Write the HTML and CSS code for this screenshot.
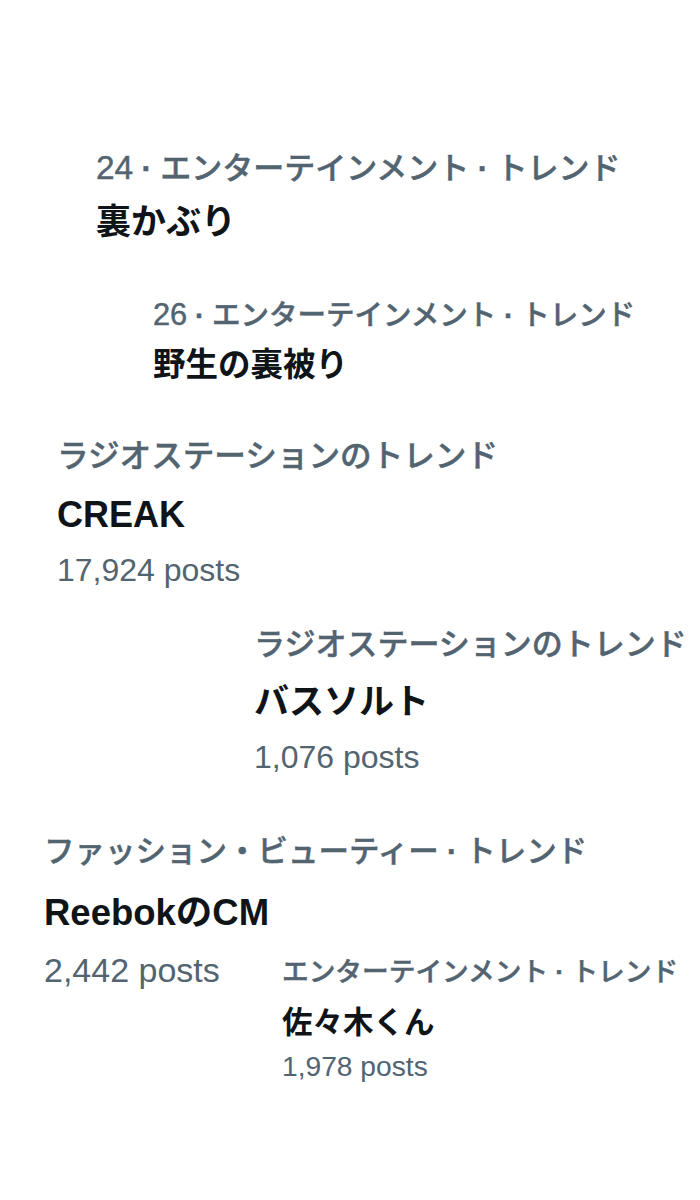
FILE: index.html
```html
<!DOCTYPE html>
<html lang="ja">
<head>
<meta charset="utf-8">
<title>トレンド</title>
<link rel="stylesheet" href="styles.css">
</head>
<body>
<main class="board">
  <article class="trend t1">
    <p class="cat"><span class="num">24</span><span class="sep">·</span>エンターテインメント<span class="sep">·</span>トレンド</p>
    <p class="name">裏かぶり</p>
  </article>
  <article class="trend t2">
    <p class="cat"><span class="num">26</span><span class="sep">·</span>エンターテインメント<span class="sep">·</span>トレンド</p>
    <p class="name">野生の裏被り</p>
  </article>
  <article class="trend t3">
    <p class="cat">ラジオステーションのトレンド</p>
    <p class="name">CREAK</p>
    <p class="posts">17,924 posts</p>
  </article>
  <article class="trend t4">
    <p class="cat">ラジオステーションのトレンド</p>
    <p class="name">バスソルト</p>
    <p class="posts">1,076 posts</p>
  </article>
  <div class="pair">
    <article class="trend t5">
      <p class="cat">ファッション・ビューティー<span class="sep">·</span>トレンド</p>
      <p class="name">ReebokのCM</p>
      <p class="posts">2,442 posts</p>
    </article>
    <article class="trend t6">
      <p class="cat">エンターテインメント<span class="sep">·</span>トレンド</p>
      <p class="name">佐々木くん</p>
      <p class="posts">1,978 posts</p>
    </article>
  </div>
</main>
</body>
</html>
```
FILE: styles.css
```css
html, body {
  margin: 0;
  padding: 0;
  background: #ffffff;
}

body {
  width: 700px;
  height: 1200px;
  overflow: hidden;
  font-family: "Liberation Sans", "Noto Sans CJK JP", sans-serif;
}

.board {
  display: flow-root;
  padding-top: 141px;
}

.trend {
  margin-left: var(--left);
  margin-top: var(--mt);
}

.trend p {
  margin: 0;
  white-space: nowrap;
}

.cat {
  font-size: var(--cat);
  line-height: var(--h1);
  height: var(--h1);
  color: #536471;
  font-weight: 500;
  -webkit-text-stroke: 0.45px #536471;
}

.num {
  font-size: 1.08em;
}

.sep {
  padding: 0 0.27em;
  font-weight: 700;
}

.name {
  font-size: var(--title);
  line-height: var(--h2);
  height: var(--h2);
  color: #0f1419;
  font-weight: 700;
}

.posts {
  font-size: var(--posts);
  line-height: var(--h3);
  height: var(--h3);
  color: #536471;
}

.t1 {
  --left: 96px;
  --mt: 0px;
  --cat: 31px;
  --title: 35px;
  --h1: 54px;
  --h2: 54px;
}

.t2 {
  --left: 153px;
  --mt: 40px;
  --cat: 28.5px;
  --title: 32.5px;
  --h1: 51px;
  --h2: 51px;
}

.t3 {
  --left: 57px;
  --mt: 35px;
  --cat: 31.6px;
  --title: 36px;
  --posts: 32px;
  --h1: 60px;
  --h2: 57px;
  --h3: 54px;
}

.t4 {
  --left: 254px;
  --mt: 19px;
  --cat: 31px;
  --title: 35px;
  --posts: 32px;
  --h1: 58px;
  --h2: 56px;
  --h3: 54px;
}

.pair {
  display: grid;
  grid-template-columns: 238px 1fr;
  align-items: start;
  margin-top: 35px;
  padding-left: 44px;
}

.t5 {
  --left: 0px;
  --mt: 0px;
  --cat: 30.5px;
  --title: 36.5px;
  --posts: 34px;
  --h1: 64px;
  --h2: 60px;
  --h3: 54px;
}

.t6 {
  --left: 0px;
  --mt: 127px;
  --cat: 26.7px;
  --title: 30.5px;
  --posts: 28.2px;
  --h1: 52px;
  --h2: 48px;
  --h3: 40px;
}
```
